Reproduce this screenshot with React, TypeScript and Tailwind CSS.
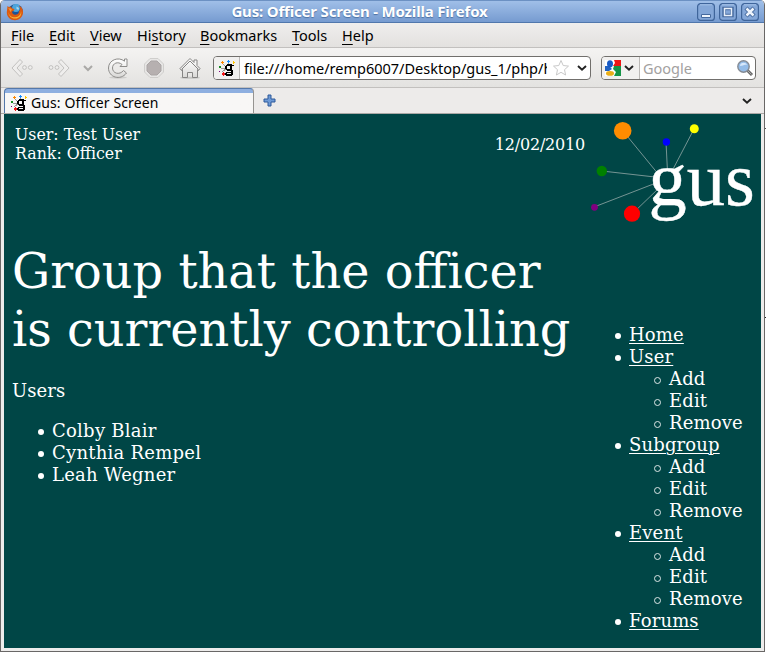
import React from "react";

const menu = [
  { key: "F", rest: "ile", pre: "", w: "w-[38px]" },
  { key: "E", rest: "dit", pre: "", w: "w-[41px]" },
  { key: "V", rest: "iew", pre: "", w: "w-[47px]" },
  { key: "s", rest: "tory", pre: "Hi", w: "w-[63px]" },
  { key: "B", rest: "ookmarks", pre: "", w: "w-[92px]" },
  { key: "T", rest: "ools", pre: "", w: "w-[50px]" },
  { key: "H", rest: "elp", pre: "", w: "w-[40px]" },
];

const nav = [
  { label: "Home", items: [] },
  { label: "User", items: ["Add", "Edit", "Remove"] },
  { label: "Subgroup", items: ["Add", "Edit", "Remove"] },
  { label: "Event", items: ["Add", "Edit", "Remove"] },
  { label: "Forums", items: [] },
];

const disc =
  "before:-ml-[14px] before:mr-[8px] before:inline-block before:h-[6px] before:w-[6px] before:rounded-full before:bg-white before:align-[2px] before:content-['']";
const ring =
  "before:-ml-[15px] before:mr-[8px] before:inline-block before:h-[7px] before:w-[7px] before:rounded-full before:border before:border-[#dde6e6] before:align-[1px] before:content-['']";

function Favicon() {
  return (
    <svg width="16" height="16" viewBox="0 0 16 16" className="shrink-0" shapeRendering="crispEdges">
      <path d="M4 4l3 3M2 8.500h5M3 12l4-3M9.500 2v2M13 4l-2 2" stroke="#999" />
      <path d="M8 4h5v1h2v1h-2v4h1v5h-1v1H7v-1H6v-2h1v-1h5v-1H8v-1H7V9H6V6h1V5h1z M8 6v3h3V6z M8 13v1h4v-1z" fill="#000" fillRule="evenodd" />
      <path d="M2 2h3v1H2zM3 1h1v3H3z" fill="#ff8800" />
      <path d="M8 1h3v1H8zM9 0h1v3H9z" fill="#168cff" />
      <path d="M14 1h1v1h1v1h-1v1h-1z" fill="#ffc500" />
      <path d="M0 6h2v2H0z" fill="#158a20" />
      <path d="M3 13h3v2H3zM4 12h1v4H4z" fill="#f01818" />
      <path d="M0 11h1v1H0z" fill="#800080" />
    </svg>
  );
}

function Firefox() {
  return (
    <svg width="18" height="18" viewBox="0 0 18 18">
      <circle cx="9.500" cy="8.500" r="7.300" fill="#1d5496" />
      <circle cx="10" cy="5" r="3.900" fill="#4ba5dc" />
      <path d="M10.500 3.500 13 5l-.5 2-2-1z" fill="#a8d9ee" />
      <path d="M1.500 3 3.200 4.200 5 3.500l.8 1.700L8.500 6 7.800 7.500 6 8.700c.2 2.500 2.500 3.600 4.500 2.800 2-.5 2.800-2 2.500-4.200l.9.800.3-3L13 2.600c3.200 1.600 4.300 4.400 4 7.400-.5 4.200-3.800 7.200-8 7.200C4.200 17.200.8 13.700.8 9.200z" fill="#dc5a10" />
      <path d="M2.200 8.500c.8 4.700 4.200 6 7 5.800 3.800-.3 5.800-2.800 5.800-6.300 1.200 4.500-1.800 7.500-5.700 7.600-4 .1-6.700-2.800-7.100-7.100z" fill="#f9b532" />
      <path d="m2.200 4.800 1.600.8 1.500-.2.500 1.300L4.500 9z" fill="#f39a35" />
    </svg>
  );
}

function Chevron({ color = "#222" }: { color?: string }) {
  return (
    <svg width="10" height="8" viewBox="0 0 10 8" className="shrink-0">
      <path d="m1 2 4 3.800L9 2" fill="none" stroke={color} strokeWidth="1.900" />
    </svg>
  );
}

function WindowButton({ kind }: { kind: "min" | "max" | "close" }) {
  return (
    <svg width="18" height="18" viewBox="0 0 18 18">
      <rect x=".6" y=".6" width="16.800" height="16.800" rx="3" fill="#84a7d8" stroke="#3f659b" strokeWidth="1.200" />
      <path d="M3 1.800h12" stroke="#a9c5eb" />
      {kind === "min" && <path d="M4.500 11.500h9v3h-9z" fill="#eef4fc" stroke="#44699e" />}
      {kind === "max" && (
        <>
          <path d="M5 5.500h8v7H5z" fill="none" stroke="#44699e" strokeWidth="3.400" />
          <path d="M5.500 5.500h7v7h-7z" fill="none" stroke="#e7effa" strokeWidth="1.500" />
        </>
      )}
      {kind === "close" && (
        <>
          <path d="m5 5 8 8M13 5l-8 8" stroke="#44699e" strokeWidth="4.400" />
          <path d="m5.500 5.500 7 7m0-7-7 7" stroke="#eef4fc" strokeWidth="2.500" />
        </>
      )}
    </svg>
  );
}

function NavIcons() {
  return (
    <svg width="205" height="30" viewBox="1 53 205 30" className="shrink-0" fill="none">
      <defs>
        <linearGradient id="fade" x1="0" x2="0" y1="0" y2="1">
          <stop stopColor="#fff" />
          <stop offset="1" stopColor="#d9d8d6" />
        </linearGradient>
      </defs>
      <g stroke="#c2c1bf" fill="#efeeed">
        <path d="m20 59.500 2.500 2.500-5.500 6 5.500 6-2.500 2.500-8-8.500z" strokeLinejoin="round" />
        <circle cx="24.500" cy="67.500" r="1.900" />
        <circle cx="30.300" cy="67.500" r="1.900" />
        <path d="M61 59.500 58.500 62l5.500 6-5.500 6 2.500 2.500 8-8.500z" strokeLinejoin="round" />
        <circle cx="51" cy="67.500" r="1.900" />
        <circle cx="57" cy="67.500" r="1.900" />
      </g>
      <path d="m84 66 4 4 4-4" stroke="#aaa9a7" strokeWidth="2" />
      <ellipse cx="118" cy="77.500" rx="9" ry="1.200" fill="#cecdcb" />
      <path d="M124.500 59v2.200c-6-5-16-1.200-16 6.800 0 9.500 12 13 18 5l-3-2.500c-4 5-11 3-11-2.500 0-4.800 5.500-7 9.500-3.500l-2 2h7V59z" fill="url(#fade)" stroke="#8d8c8a" />
      <path d="M150 58.500h8l5.500 5.500v8l-5.500 5.500h-8l-5.500-5.500v-8z" fill="#e7e6e5" stroke="#cfcecc" />
      <path d="M151 61h6l4 4v6l-4 4h-6l-4-4v-6z" fill="#b6b0b0" stroke="#aaa5a5" />
      <ellipse cx="190" cy="77.800" rx="10" ry="1" fill="#c4c3c1" />
      <path d="m180 68.500 10-10 4 4V60h3v5.500l3 3-1.500 2-1-1v8h-5v-5h-5v5h-5v-8l-1 1z" fill="url(#fade)" stroke="#858483" />
      <path d="m181.500 69.500 8.500-8.500 8.500 8.500" stroke="#858483" />
    </svg>
  );
}

function Logo() {
  return (
    <svg width="170" height="110" viewBox="588 118 170 110" className="block">
      <g stroke="#a8b6b4" strokeWidth=".7">
        <path d="m623 131 36 44M666 142l1.500 30M694 129l-23 44M602 171l53 6M594 207l62-24M632 214l27-26" />
      </g>
      <circle cx="622.700" cy="130.700" r="8.800" fill="#ff8c00" />
      <circle cx="666.400" cy="142" r="3.700" fill="#00f" />
      <circle cx="694.300" cy="128.800" r="4.500" fill="#ff0" />
      <circle cx="601.800" cy="171" r="5.200" fill="#008000" />
      <circle cx="594.500" cy="207.300" r="3.400" fill="#800080" />
      <circle cx="632" cy="213.700" r="8.100" fill="#f00" />
      <ellipse cx="666.500" cy="181" rx="9" ry="11" fill="#004646" />
      <text x="648.500" y="204.500" fontSize="76.500" fill="#fff" stroke="#fff" strokeWidth=".4" className="font-['Liberation_Serif',serif]">gus</text>
    </svg>
  );
}

export default function App() {
  return (
    <div className="flex h-[652px] w-[766px] overflow-hidden bg-white font-['Noto_Sans',sans-serif] text-black">
      <div className="flex h-[652px] w-[765px] flex-col overflow-hidden rounded-t-[5px] border-b border-l border-r border-[#696766] bg-[#edeceb]">
        <header className="flex h-[23px] shrink-0 items-center border-b border-t border-b-[#5077ac] border-t-[#6c91c3] bg-linear-to-b from-[#a0bfe8] to-[#769bd0] pl-[5px] pr-[5px]">
          <Firefox />
          <h1 className="flex-1 pr-[2px] text-center text-[15px] leading-[21px] font-bold tracking-[-0.18px] text-white [text-shadow:0_1px_1px_#4c70a2]">Gus: Officer Screen - Mozilla Firefox</h1>
          <div className="flex gap-1"><WindowButton kind="min" /><WindowButton kind="max" /><WindowButton kind="close" /></div>
        </header>
        <nav className="flex h-[25px] shrink-0 items-center border-b border-[#c2c0be] bg-linear-to-b from-[#efeeed] to-[#e3e1df] pl-[10px] text-[14.5px] leading-[24px]">
          {menu.map((m) => (
            <span key={m.key} className={`${m.w} shrink-0 whitespace-nowrap`}>{m.pre}<span className="underline decoration-1 underline-offset-[3px]">{m.key}</span>{m.rest}</span>
          ))}
        </nav>
        <div className="flex h-10 shrink-0 items-center border-b border-[#c2c0be] bg-linear-to-b from-[#f4f3f2] to-[#e3e2e0] pr-[8px]">
          <NavIcons />
          <div className="ml-[7px] flex h-6 w-[378px] shrink-0 items-center overflow-hidden rounded-[4px] border border-[#716f6c] bg-white">
            <div className="flex h-full w-[26px] items-center justify-center border-r border-[#bbb9b7] bg-[#f1f0ef]"><Favicon /></div>
            <span className="w-[307px] overflow-hidden pl-[4px] text-[14.5px] leading-[22px] whitespace-nowrap">file:///home/remp6007/Desktop/gus_1/php/h</span>
            <svg width="18" height="18" viewBox="0 0 18 18" className="mr-[7px] ml-[5px] shrink-0"><path d="m9 1.500 2.200 5 5.300.6-4 3.600 1.100 5.300L9 13.300 4.400 16l1.100-5.300-4-3.600 5.300-.6z" fill="#fff" stroke="#c9c9c9" /></svg>
            <Chevron />
          </div>
          <div className="ml-[10px] flex h-6 w-[155px] shrink-0 items-center overflow-hidden rounded-[4px] border border-[#716f6c] bg-white">
            <div className="flex h-full w-[38px] items-center gap-[3px] border-r border-[#bbb9b7] bg-[#f1f0ef] pl-[3px]">
              <svg width="16" height="16" viewBox="0 0 16 16" className="shrink-0">
                <path d="M0 0h16v16H0z" fill="#fff" />
                <path d="M9 0h7v6H8l2-3z" fill="#ed1515" /><path d="M9 6h7v10H9l2-4-3-3z" fill="#159447" />
                <path d="M0 6h4l3 3-3 2H0z" fill="#2162c2" />
                <ellipse cx="5" cy="3.800" rx="3" ry="3.600" fill="#1759c5" /><ellipse cx="5" cy="13.400" rx="4" ry="2.400" fill="#eaae18" />
              </svg>
              <Chevron />
            </div>
            <span className="flex-1 pl-[3px] text-[14.5px] leading-[22px] text-[#a3a19f]">Google</span>
            <svg width="18" height="18" viewBox="0 0 18 18" className="mr-[1px] shrink-0"><path d="m11 11 5 5" stroke="#666" strokeWidth="3" /><path d="m12 12 3.500 3.500" stroke="#aaa" /><circle cx="7.500" cy="7.500" r="5.700" fill="#94bce8" stroke="#858b94" strokeWidth="1.400" /><path d="M4 7c0-4 6-4 7-1-3-1-4 1-7 1" fill="#d7e8fb" /></svg>
          </div>
        </div>
        <div className="flex h-[26px] shrink-0 items-center border-b border-[#aaa8a6] bg-[#edebea] pl-[3px] pr-[12px]">
          <div className="flex h-[25px] w-[250px] items-center rounded-t-[4px] border-x border-t border-[#5478aa] border-r-[#969491] bg-linear-to-b from-[#8eafe0] from-[4px] to-[#f8f7f6] to-[4px] pt-[4px] pl-[6px]">
            <Favicon /><span className="ml-[4px] text-[14px] leading-5 tracking-[0.1px] whitespace-nowrap">Gus: Officer Screen</span>
          </div>
          <svg width="13" height="13" viewBox="0 0 13 13" className="ml-[9px]"><path d="M5 1h3v4h4v3H8v4H5V8H1V5h4z" fill="#6d99d5" stroke="#2c599a" /></svg>
          <span className="ml-auto"><Chevron /></span>
        </div>
        <main className="mr-[3px] ml-[3px] flex h-[534px] shrink-0 bg-[#004646] font-['DejaVu_Serif',serif] text-white">
          <section className="w-[584px] shrink-0">
            <div className="flex h-[120px] justify-between pt-[11px] pr-[3px] pl-[11px] text-[15.8px] leading-[19px]">
              <p>User: Test User<br />Rank: Officer</p>
              <p className="pt-[10px] text-[16px] tracking-[-0.2px]">12/02/2010</p>
            </div>
            <h2 className="pt-[9px] pl-[8px] text-[47.800px] leading-[58px] whitespace-nowrap">Group that the officer<br />is currently controlling</h2>
            <p className="mt-[21px] pl-[8px] text-[18px] leading-[22px] tracking-[0.1px]">Users</p>
            <ul className="mt-[18px] pl-[48px] text-[18px] leading-[22px] tracking-[0.25px]">
              {["Colby Blair", "Cynthia Rempel", "Leah Wegner"].map((name) => <li key={name} className={disc}>{name}</li>)}
            </ul>
          </section>
          <aside className="w-[173px] shrink-0">
            <div className="pt-[4px]"><Logo /></div>
            <ul className="mt-[96px] pl-[41px] text-[18px] leading-[22px] tracking-[0.15px]">
              {nav.map((group) => (
                <li key={group.label} className={disc}><a className="underline decoration-1 underline-offset-2">{group.label}</a>
                  {group.items.length > 0 && <ul className="pl-[40px]">{group.items.map((item) => <li key={item} className={ring}>{item}</li>)}</ul>}
                </li>
              ))}
            </ul>
          </aside>
        </main>
      </div>
      <div className="flex w-px flex-col bg-white pt-[128px]"><span className="h-px bg-[#555]" /><span className="mt-[188px] h-px bg-[#222]" /></div>
    </div>
  );
}
